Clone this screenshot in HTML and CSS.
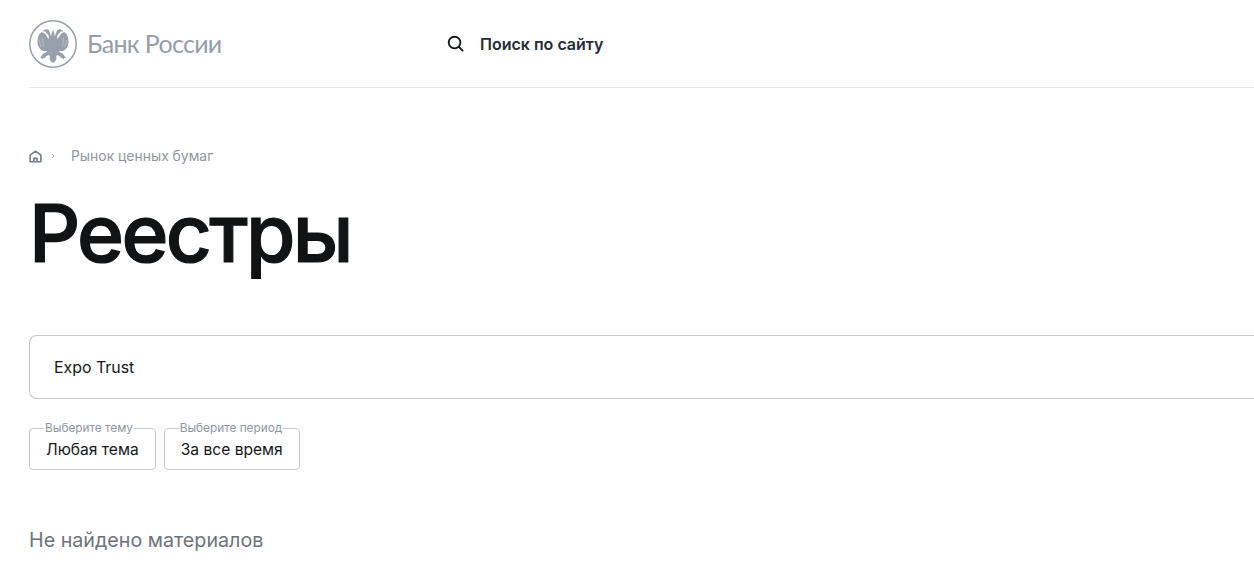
FILE: index.html
```html
<!DOCTYPE html>
<html lang="ru">
<head>
<meta charset="utf-8">
<title>Реестры</title>
<link rel="stylesheet" href="styles.css">
</head>
<body>
<div class="page">
  <header class="header">
    <a class="logo" href="#">
      <svg class="logo-mark" viewBox="0 0 48 48" aria-hidden="true">
        <circle cx="24" cy="24" r="23.200" fill="none" stroke="#98a0ac" stroke-width="1.500"/>
        <g fill="#98a0ac">
          <path d="M24 10l1 2 .9 4.500 1.100-3.500 1.200-3 2.500-1.100 2.300 1 1.300 1.500-2.200-.2-1 1.400-2.200 1.800-.8 2.600.4 2.300 1.400-2.500 2.300-3.200 3-1.500 2.400 2 1.600 3.800.4 4-.7 3.800-1.900 3.400-2.900 1.900-2.500.3-1.900-.3 1 1.300 3.300 1.400 1.800 2.700 1.400 1.900-1.900-.2-.9 1.400-1.100-1.800-1.200.2-1.400-1.800-2.600-1.200-.9 1.300.3 2.500-1.400 2.700L24 43z"/>
          <path d="M24 10l-1 2-.9 4.500-1.100-3.500-1.200-3-2.500-1.100-2.300 1-1.300 1.500 2.200-.2 1 1.400 2.200 1.800.8 2.600-.4 2.300-1.400-2.500-2.300-3.200-3-1.500-2.400 2-1.600 3.800-.4 4 .7 3.800 1.900 3.400 2.900 1.900 2.500.3 1.900-.3-1 1.300-3.300 1.400-1.800 2.700-1.400 1.900 1.900-.2.9 1.400 1.100-1.800 1.200.2 1.400-1.800 2.600-1.200.9 1.300-.3 2.500 1.400 2.700L24 43z"/>
        </g>
        <path d="M34.500 18.500l-1 8M37.500 20l-1.300 7M13.500 18.500l1 8M10.500 20l1.300 7" fill="none" stroke="#fff" stroke-width=".5" opacity=".6"/>
      </svg>
      <span class="logo-text">Банк России</span>
    </a>
    <a class="search" href="#">
      <svg class="search-icon" viewBox="0 0 18 18" aria-hidden="true">
        <circle cx="8" cy="8" r="6.200" fill="none" stroke="#14181c" stroke-width="2"/>
        <path d="M12.600 12.600l3.900 3.900" fill="none" stroke="#14181c" stroke-width="2" stroke-linecap="round"/>
      </svg>
      <span class="search-text">Поиск по сайту</span>
    </a>
  </header>
  <nav class="crumbs">
    <svg class="home-icon" viewBox="0 0 14 14" aria-hidden="true">
      <path d="M1.200 5.600L7 1.300l5.800 4.300V12.700H1.200zM5.300 12.700V9h3.400v3.700" fill="none" stroke="#767d87" stroke-width="1.700" stroke-linejoin="round"/>
    </svg>
    <svg class="crumb-sep" viewBox="0 0 4 6" aria-hidden="true">
      <path d="M1 1l2 2-2 2" fill="none" stroke="#9aa1aa" stroke-width=".8"/>
    </svg>
    <a class="crumb-link" href="#">Рынок ценных бумаг</a>
  </nav>
  <h1 class="title">Реестры</h1>
  <div class="query">Expo Trust</div>
  <div class="filters">
    <fieldset class="filter">
      <legend class="filter-label">Выберите тему</legend>
      <span class="filter-value">Любая тема</span>
    </fieldset>
    <fieldset class="filter">
      <legend class="filter-label">Выберите период</legend>
      <span class="filter-value">За все время</span>
    </fieldset>
  </div>
  <p class="empty">Не найдено материалов</p>
</div>
</body>
</html>
```
FILE: styles.css
```css
* { box-sizing: border-box; }
html, body { margin: 0; padding: 0; background: #fff; overflow: hidden; height: 583px; }
body { font-family: Inter, "Noto Sans", sans-serif; color: #14181c; }
a { color: inherit; text-decoration: none; }
.page { padding-left: 29px; width: 1254px; height: 583px; overflow: hidden; }
.header { display: flex; align-items: center; height: 88px; border-bottom: 1px solid #e6e8ea; }
.logo { display: flex; align-items: center; width: 418px; }
.logo-mark { width: 48px; height: 48px; flex: none; }
.logo-text { margin: 0 0 2px 10px; font-family: Lato, sans-serif; font-size: 25px; font-weight: 400; color: #979ea8; letter-spacing: -.7px; }
.search { display: flex; align-items: center; gap: 16px; }
.search-icon { width: 17px; height: 17px; flex: none; }
.search-text { font-size: 16px; font-weight: 600; color: #252c38; }
.crumbs { display: flex; align-items: center; height: 18px; margin-top: 59px; color: #8f969f; font-size: 13.900px; }
.home-icon { width: 13px; height: 13px; flex: none; }
.crumb-sep { width: 4px; height: 6px; margin: 0 16px 0 9px; flex: none; }
.title { margin: 18px 0 0; font-size: 80px; line-height: 100px; font-weight: 500; color: #111314; letter-spacing: -2.700px; -webkit-text-stroke: 1.200px #111314; }
.query { display: flex; align-items: center; height: 64px; margin-top: 52px; padding-left: 24px; border: 1px solid #c4c7cb; border-right: 0; border-radius: 8px 0 0 8px; font-size: 15.900px; color: #14181c; }
.filters { display: flex; gap: 8px; margin-top: 22px; }
.filter { margin: 0; padding: 0 16px 4px; height: 49px; min-width: 0; border: 1px solid #c4c7cb; border-radius: 4px; display: block; }
.filter-label { padding: 0 1px; margin-left: -2px; font-size: 11.800px; line-height: 14px; color: #8f969f; }
.filter-value { display: block; font-size: 15.600px; line-height: 24px; margin-top: 3px; color: #14181c; white-space: nowrap; }
.empty { margin: 56px 0 0; font-size: 19.700px; line-height: 28px; color: #6c737d; }
```
